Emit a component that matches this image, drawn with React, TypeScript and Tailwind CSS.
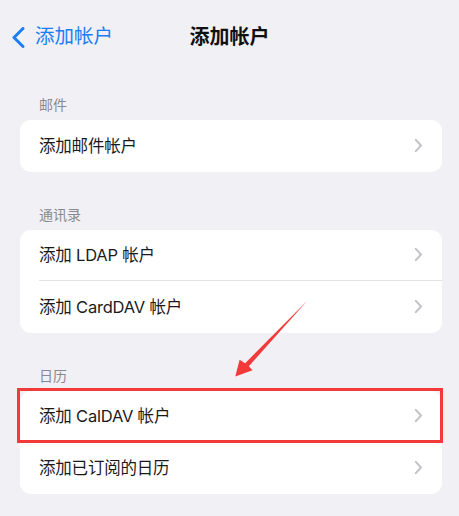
const font = "font-['Inter','Noto_Sans_CJK_SC',sans-serif]";

type Row = { label: string; highlight?: boolean };

const sections: { title: string; rows: Row[] }[] = [
  { title: "邮件", rows: [{ label: "添加邮件帐户" }] },
  { title: "通讯录", rows: [{ label: "添加 LDAP 帐户" }, { label: "添加 CardDAV 帐户" }] },
  { title: "日历", rows: [{ label: "添加 CalDAV 帐户", highlight: true }, { label: "添加已订阅的日历" }] },
];

function Chevron() {
  return (
    <svg width="9" height="15" viewBox="0 0 9 15" fill="none" className="text-[#c3c3c7]">
      <path d="M1.8 1.8 L7 7.5 L1.8 13.2" stroke="currentColor" strokeWidth="2" strokeLinecap="round" strokeLinejoin="round" />
    </svg>
  );
}

function ListRow({ row, last }: { row: Row; last: boolean }) {
  return (
    <div className="relative h-[51.5px] flex items-center pl-[19px]">
      <div
        className={`flex-1 h-full flex items-center justify-between pr-[19px] ${
          last ? "" : "border-b border-[#e3e3e6]"
        }`}
      >
        <span className="text-[16.5px] tracking-[-0.2px] text-[#1a1a1c] leading-none">{row.label}</span>
        <Chevron />
      </div>
      {row.highlight && (
        <div className="absolute -left-[3px] -top-[3px] -right-[1px] -bottom-[0.5px] border-[3px] border-[#f23a3a]" />
      )}
    </div>
  );
}

export default function App() {
  return (
    <div className={`relative w-[459px] h-[516px] overflow-hidden bg-[#f0f0f5] ${font}`}>
      {/* ── Nav bar ── */}
      <header className="relative h-[74px] flex items-center">
        <div className="flex items-center pl-[12px] gap-[10px] text-[#1a7ef5]">
          <svg width="13" height="21" viewBox="0 0 13 21" fill="none">
            <path d="M11 1.5 L2 10.5 L11 19.5" stroke="currentColor" strokeWidth="3" strokeLinecap="round" strokeLinejoin="round" />
          </svg>
          <span className="text-[19.5px] leading-none">添加帐户</span>
        </div>
        <h1 className="absolute inset-x-0 text-center text-[20px] font-semibold text-[#111] leading-none pointer-events-none">
          添加帐户
        </h1>
      </header>

      {/* ── Sections ── */}
      <div className="flex flex-col gap-[35px] pt-[23px]">
        {sections.map((s) => (
          <section key={s.title}>
            <div className="pl-[39px] pb-[7px] text-[14px] leading-[16px] text-[#8a8a8e]">{s.title}</div>
            <div className="ml-[20px] mr-[17px] bg-white rounded-[11px]">
              {s.rows.map((r, i) => (
                <ListRow key={r.label} row={r} last={i === s.rows.length - 1} />
              ))}
            </div>
          </section>
        ))}
      </div>

      {/* ── Annotation arrow ── */}
      <svg className="absolute inset-0 pointer-events-none" width="459" height="516" viewBox="0 0 459 516">
        <polygon
          points="307.5,300.5 248.8,366.2 252.5,370.2 235.3,376.6 239.6,359.8 245.2,363.2"
          fill="#f23a3a"
        />
      </svg>
    </div>
  );
}
